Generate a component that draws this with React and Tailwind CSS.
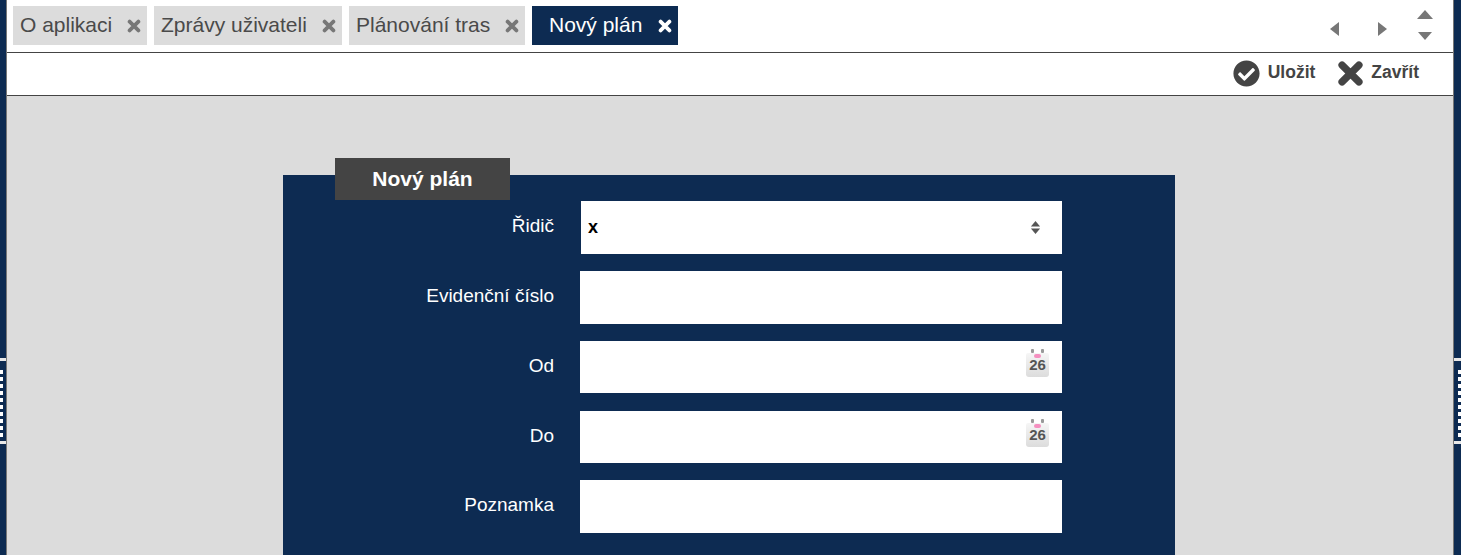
import React from 'react';
import { FaCheckCircle } from 'react-icons/fa';

const tabs = [
  { label: 'O aplikaci', width: 'w-[134px]' },
  { label: 'Zprávy uživateli', width: 'w-[188px]' },
  { label: 'Plánování tras', width: 'w-[176px]' },
];

const rows = [
  { label: 'Evidenční číslo', h: 'h-[53px]', mb: 'mb-[17px]' },
  { label: 'Od', h: 'h-[52px]', mb: 'mb-[18px]', date: true },
  { label: 'Do', h: 'h-[52px]', mb: 'mb-[17px]', date: true },
  { label: 'Poznamka', h: 'h-[53px]', mb: 'mb-0' },
];

function XIcon({ className }) {
  return (
    <svg viewBox="0 0 24 24" className={className} fill="none" stroke="currentColor" strokeWidth="6.5" strokeLinecap="round">
      <path d="M4.5 4.5 L19.5 19.5 M19.5 4.5 L4.5 19.5" />
    </svg>
  );
}

function Caret({ points, className }) {
  return (
    <svg viewBox="0 0 16 16" className={className} fill="currentColor">
      <polygon points={points} />
    </svg>
  );
}

function Splitter({ align }) {
  return (
    <div className={`flex flex-col ${align} mt-[358px] w-full`}>
      <div className="h-[3px] w-full bg-[#e8e8e8] mb-[9px]" />
      {Array.from({ length: 10 }).map((_, i) => (
        <div key={i} className="w-[3px] h-[4px] bg-white mb-[3px]" />
      ))}
      <div className="h-[3px] w-full bg-[#e8e8e8] mt-[1px]" />
    </div>
  );
}

function CalendarIcon() {
  return (
    <div className="absolute right-[13px] top-[7px] w-[23px] h-[29px] flex flex-col items-center">
      <div className="flex gap-[7px] mt-[1px] h-[4px]">
        <span className="w-[3px] h-[4px] bg-[#999] rounded-[1px]" />
        <span className="w-[3px] h-[4px] bg-[#999] rounded-[1px]" />
      </div>
      <div className="w-full flex-1 rounded-b-[3px] rounded-t-[2px] bg-gradient-to-b from-[#f6f6f6] to-[#dcdcdc] flex flex-col items-center">
        <span className="w-[7px] h-[4px] mt-[1px] rounded-full bg-[#f58fc0]" />
        <span className="text-[15px] leading-[14px] font-bold text-[#555]">26</span>
      </div>
    </div>
  );
}

export default function App() {
  return (
    <div className="h-[555px] w-[1461px] flex overflow-hidden bg-[#0d2b52] font-['Liberation_Sans',Arial,sans-serif]">
      <div className="w-[6px] shrink-0">
        <Splitter align="items-start" />
      </div>

      <div className="flex-1 flex flex-col min-w-0 border-l border-r border-[#777] bg-[#dcdcdc]">
        {/* tabs */}
        <div className="h-[53px] shrink-0 bg-white border-b border-[#444] flex pl-[6px] pt-[6px] gap-[7px]">
          {tabs.map((t) => (
            <div key={t.label} className={`${t.width} h-[39px] bg-[#dcdcdc] text-[#4a4a4a] text-[21px] flex items-center justify-between pl-[7px] pr-[6px]`}>
              <span className="-mt-[1px] whitespace-nowrap">{t.label}</span>
              <XIcon className="text-[#777] w-[14px] h-[14px]" />
            </div>
          ))}
          <div className="w-[146px] h-[39px] bg-[#0d2b52] text-white text-[21px] flex items-center justify-between pl-[17px] pr-[6px]">
            <span className="-mt-[1px] whitespace-nowrap">Nový plán</span>
            <XIcon className="w-[14px] h-[14px]" />
          </div>
          <div className="ml-auto flex items-start text-[#777] pr-[20px]">
            <Caret points="12,1 12,15 3,8" className="w-[16px] h-[16px] mt-[15px]" />
            <Caret points="4,1 4,15 13,8" className="w-[16px] h-[16px] mt-[15px] ml-[31px]" />
            <div className="flex flex-col items-center ml-[27px] mt-[1px] gap-[6px]">
              <Caret points="8,3 16,12 0,12" className="w-[16px] h-[16px]" />
              <Caret points="1,3 15,3 8,11" className="w-[16px] h-[16px]" />
            </div>
          </div>
        </div>

        {/* toolbar */}
        <div className="h-[43px] shrink-0 bg-white border-b border-[#444] flex items-center justify-end pr-[34px] text-[#444] text-[17.5px] font-bold">
          <FaCheckCircle className="w-[27px] h-[27px] mr-[8px] -mt-[1px]" />
          <span className="mr-[22px] -mt-[3px]">Uložit</span>
          <XIcon className="w-[27px] h-[27px] mr-[7px] -mt-[1px]" />
          <span className="-mt-[3px]">Zavřít</span>
        </div>

        {/* form */}
        <div className="flex-1 min-h-0 pl-[276px] pt-[62px]">
          <div className="relative z-10 ml-[52px] w-[175px] h-[42px] bg-[#444] text-white text-[21px] font-bold flex items-center justify-center">
            Nový plán
          </div>
          <div className="w-[892px] h-[400px] -mt-[25px] bg-[#0d2b52] pt-[26px] text-white text-[19px]">
            <div className="flex mb-[17px]">
              <div className="w-[271px] text-right pt-[15px] leading-[20px]">Řidič</div>
              <div className="ml-[27px] w-[481px] h-[53px] bg-white text-black font-bold text-[18px] flex items-center justify-between pl-[7px] pr-[21px]">
                <span>x</span>
                <svg viewBox="0 0 12 16" className="w-[11px] h-[15px] text-[#555]" fill="currentColor">
                  <polygon points="6,1 11,7 1,7" />
                  <polygon points="1,9 11,9 6,15" />
                </svg>
              </div>
            </div>
            {rows.map((r) => (
              <div key={r.label} className={`flex ${r.mb}`}>
                <div className="w-[271px] text-right pt-[15px] leading-[20px]">{r.label}</div>
                <div className={`relative ml-[26px] w-[482px] ${r.h} bg-white`}>
                  {r.date && <CalendarIcon />}
                </div>
              </div>
            ))}
          </div>
        </div>
      </div>

      <div className="w-[7px] shrink-0">
        <Splitter align="items-end" />
      </div>
    </div>
  );
}
